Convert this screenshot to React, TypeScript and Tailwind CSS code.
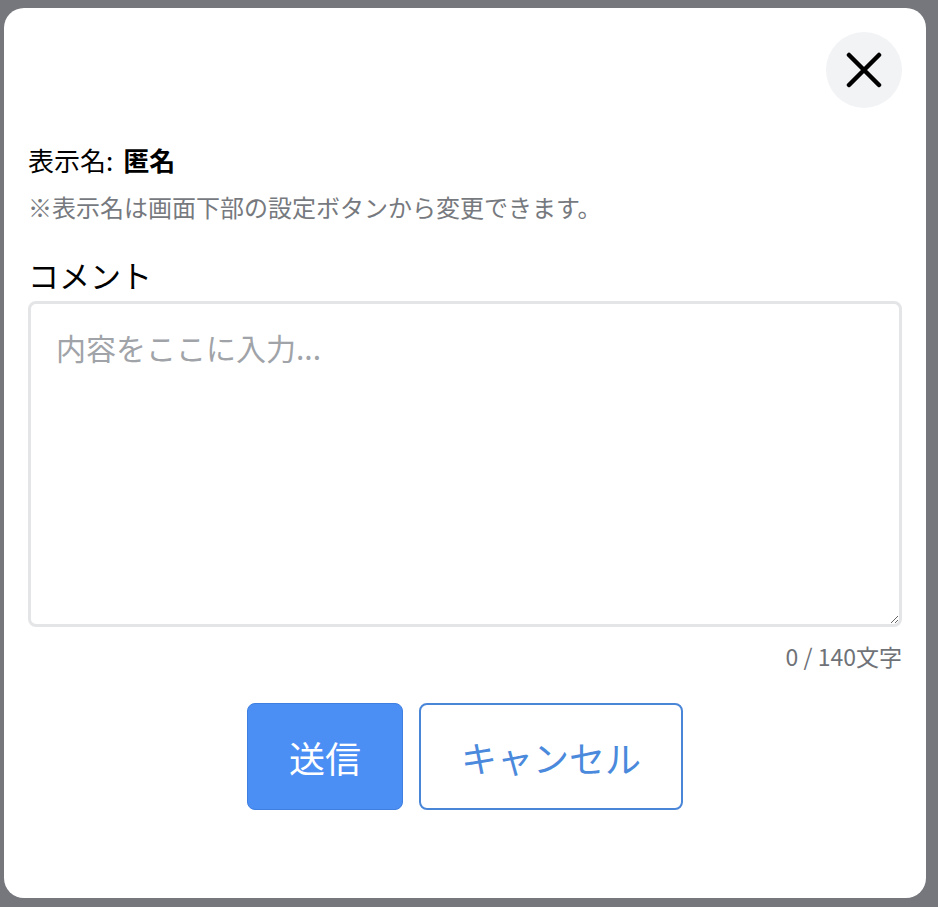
import React, { useState } from 'react';

const FONT = '"Noto Sans CJK JP", "Noto Sans", sans-serif';

const CloseIcon = () => (
  <svg width="36" height="36" viewBox="0 0 36 36" fill="none">
    <path d="M3 3L33 33M33 3L3 33" stroke="#000" strokeWidth="4.5" strokeLinecap="round" />
  </svg>
);

export default function App() {
  const [text, setText] = useState('');

  return (
    <div className="min-h-[907px] w-full bg-[#75777c] pt-[8px] pl-[4px]" style={{ fontFamily: FONT }}>
      <div className="w-[922px] h-[890px] bg-white rounded-[20px] px-[24px] pt-[24px] flex flex-col">
        {/* Header */}
        <div className="flex justify-end">
          <button className="w-[76px] h-[76px] rounded-full bg-[#f2f3f5] flex items-center justify-center">
            <CloseIcon />
          </button>
        </div>

        {/* Display name */}
        <div className="mt-[34px] text-[26px] leading-[36px] text-black">
          表示名:<span className="ml-[10px] font-bold">匿名</span>
        </div>
        <div className="mt-[12px] text-[24px] leading-[34px] text-[#76797e]">
          ※表示名は画面下部の設定ボタンから変更できます。
        </div>

        {/* Comment */}
        <label className="mt-[31px] text-[31px] leading-[40px] text-black">コメント</label>
        <textarea
          value={text}
          onChange={(e) => setText(e.target.value)}
          maxLength={140}
          placeholder="内容をここに入力..."
          className="mt-[6px] w-full h-[326px] border-[3px] border-[#e4e5e7] rounded-[8px] px-[25px] py-[23px] text-[30px] leading-[40px] text-black placeholder:text-[#a0a3a8] outline-none resize-y"
          style={{ fontFamily: FONT }}
        />
        <div className="mt-[13px] text-right text-[23px] leading-[32px] text-[#6f7277]">
          {text.length} / 140文字
        </div>

        {/* Actions */}
        <div className="mt-[31px] flex justify-center gap-[16px]">
          <button className="w-[156px] h-[107px] rounded-[8px] bg-[#4b8ff5] border border-[#3f7fe0] text-white text-[36px]">
            送信
          </button>
          <button className="w-[264px] h-[107px] rounded-[8px] bg-white border-2 border-[#4a86d8] text-[#4a89dc] text-[36px]">
            キャンセル
          </button>
        </div>
      </div>
    </div>
  );
}
